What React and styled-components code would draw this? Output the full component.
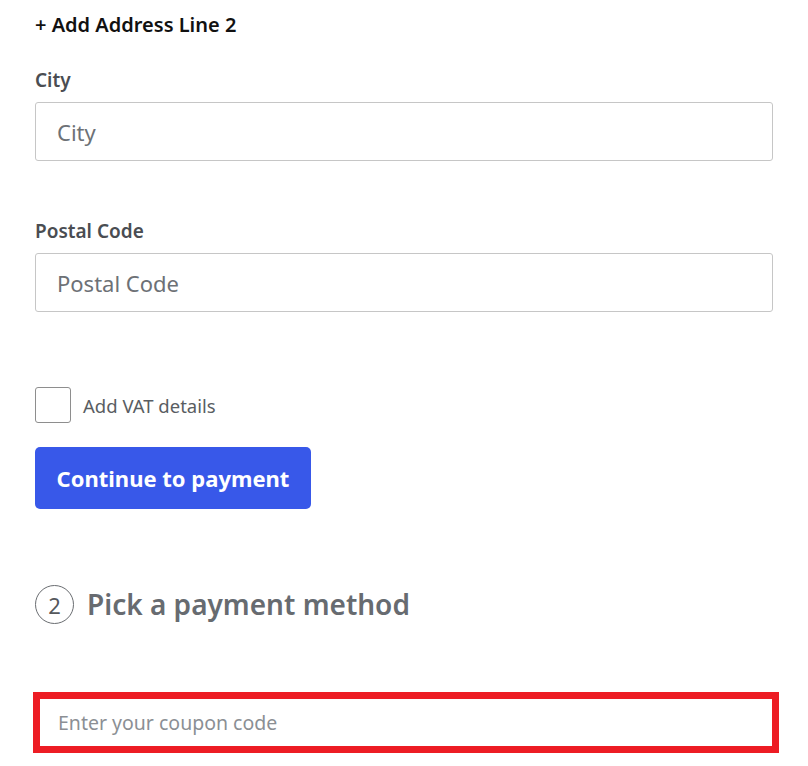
import React from 'react';
import styled, { createGlobalStyle } from 'styled-components';

const GlobalStyle = createGlobalStyle`
  body {
    margin: 0;
    background: #fff;
    font-family: "Noto Sans", "Open Sans", sans-serif;
  }
  * {
    box-sizing: border-box;
  }
`;

const Page = styled.div`
  padding: 13px 35px 0;
  width: 808px;
`;

const AddLink = styled.div`
  font-size: 20px;
  font-weight: 600;
  line-height: 24px;
  color: #111;
`;

const Field = styled.div`
  display: flex;
  flex-direction: column;
  gap: 10px;
  margin-top: ${props => props.top || 0}px;
`;

const Label = styled.label`
  font-size: 19px;
  font-weight: 600;
  line-height: 24px;
  color: #4a4d52;
`;

const TextInput = styled.input`
  height: 59px;
  width: 100%;
  border: 1px solid #c6c6c6;
  border-radius: 3px;
  padding: 0 21px;
  font-family: inherit;
  font-size: 22px;
  color: #333;
  outline: none;

  &::placeholder {
    color: #6d7176;
  }
`;

const CheckRow = styled.label`
  display: flex;
  align-items: center;
  gap: 12px;
  margin-top: 75px;
  font-size: 18.5px;
  color: #595d62;
`;

const Box = styled.span`
  width: 36px;
  height: 36px;
  border: 1px solid #8e8e8e;
  border-radius: 3px;
  background: #fff;
`;

const PrimaryButton = styled.button`
  margin-top: 24px;
  height: 62px;
  width: 276px;
  border: none;
  border-radius: 5px;
  background: #3858e9;
  color: #fff;
  font-family: inherit;
  font-size: 22px;
  font-weight: 700;
  cursor: pointer;
`;

const StepHeading = styled.div`
  display: flex;
  align-items: center;
  gap: 13px;
  margin-top: 76px;
`;

const StepNumber = styled.span`
  width: 39px;
  height: 39px;
  border: 1px solid #6a6d71;
  border-radius: 50%;
  display: flex;
  align-items: center;
  justify-content: center;
  font-size: 22px;
  color: #55585c;
`;

const StepTitle = styled.h2`
  margin: 0;
  font-size: 28px;
  font-weight: 600;
  color: #676b70;
  line-height: 39px;
`;

const CouponInput = styled.input`
  display: block;
  margin: 68px 0 0 -2px;
  width: calc(100% + 8px);
  height: 61px;
  border: 7px solid #ed1c24;
  padding: 0 18px;
  font-family: inherit;
  font-size: 19.5px;
  outline: none;

  &::placeholder {
    color: #8b8f94;
  }
`;

export default function App() {
  return (
    <>
      <GlobalStyle />
      <Page>
        <AddLink>+ Add Address Line 2</AddLink>
        <Field top={31}>
          <Label>City</Label>
          <TextInput placeholder="City" />
        </Field>
        <Field top={58}>
          <Label>Postal Code</Label>
          <TextInput placeholder="Postal Code" />
        </Field>
        <CheckRow>
          <Box />
          Add VAT details
        </CheckRow>
        <PrimaryButton>Continue to payment</PrimaryButton>
        <StepHeading>
          <StepNumber>2</StepNumber>
          <StepTitle>Pick a payment method</StepTitle>
        </StepHeading>
        <CouponInput placeholder="Enter your coupon code" />
      </Page>
    </>
  );
}
